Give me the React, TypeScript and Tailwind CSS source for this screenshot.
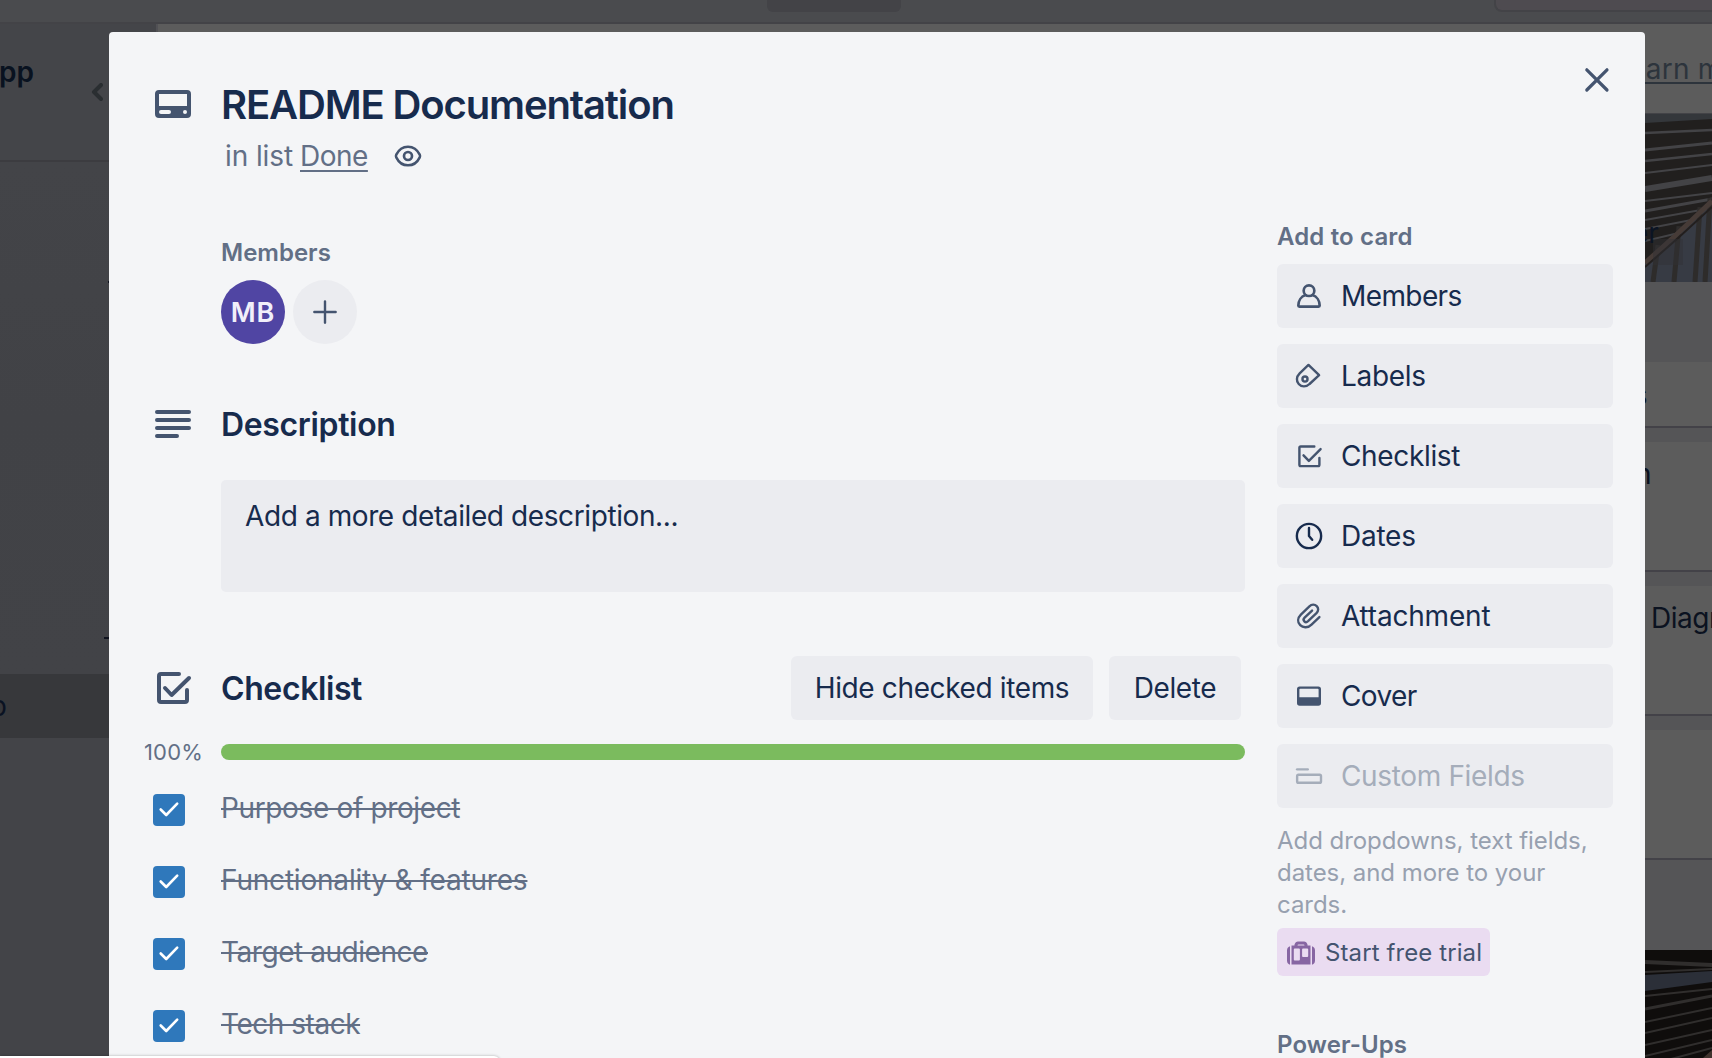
import React from "react";

const navy = "text-[#172b4d]";

function Icon({ className = "", children }: { className?: string; children: React.ReactNode }) {
  return (
    <svg viewBox="0 0 24 24" fill="none" className={`shrink-0 ${className}`}>
      {children}
    </svg>
  );
}

const stroke = { stroke: "currentColor", strokeWidth: 2, strokeLinecap: "round", strokeLinejoin: "round" } as const;

function CardIcon() {
  return (
    <Icon className="size-12 text-[#44546f]">
      <path
        fillRule="evenodd"
        fill="currentColor"
        d="M5 5h14a2 2 0 0 1 2 2v10a2 2 0 0 1-2 2H5a2 2 0 0 1-2-2V7a2 2 0 0 1 2-2ZM5 7v6h14V7ZM6 15a1 1 0 0 0 0 2h4a1 1 0 0 0 0-2ZM18 15a1 1 0 1 0 0 2a1 1 0 0 0 0-2Z"
      />
    </Icon>
  );
}

const sideItems: { label: string; tone?: string; track: string; icon: React.ReactNode }[] = [
  {
    label: "Members",
    track: "tracking-[-0.6px]",
    icon: (
      <>
        <circle cx="12" cy="8" r="4" stroke="currentColor" strokeWidth="2" />
        <path {...stroke} d="M9.4 11.3C6 12.4 4 15.8 4 19.2q0 .8.8.8h14.4q.8 0 .8-.8c0-3.4-2-6.8-5.4-7.9" />
      </>
    ),
  },
  {
    label: "Labels",
    track: "tracking-[-0.3px]",
    icon: (
      <>
        <path {...stroke} strokeWidth={1.8} d="M11.6 3.7L5 10C2.400 12.600 2.400 16 4.300 18C6.300 20.400 10 20.400 12.400 18L19.600 11.400Z" />
        <circle cx="9" cy="14.300" r="1.900" stroke="currentColor" strokeWidth="1.800" />
      </>
    ),
  },
  {
    label: "Checklist",
    track: "tracking-[-0.35px]",
    icon: (
      <>
        <path {...stroke} strokeWidth={1.800} d="M16 4.900H5.800a1 1 0 0 0-1 1v12.700a1 1 0 0 0 1 1h13a1 1 0 0 0 1-1V13.500" />
        <path {...stroke} strokeWidth={1.800} d="M7.900 11.500l4 4.200L20.700 6.800" />
      </>
    ),
  },
  {
    label: "Dates",
    tone: navy,
    track: "tracking-[-0.25px]",
    icon: (
      <>
        <circle cx="12" cy="12" r="9.100" stroke="currentColor" strokeWidth="1.800" />
        <path {...stroke} strokeWidth={1.800} d="M12 6v6l2.400 2.800" />
      </>
    ),
  },
  {
    label: "Attachment",
    track: "tracking-[-0.2px]",
    icon: (
      <path
        {...stroke}
        strokeWidth={1.8}
        d="M20.400 12.800l-5.900 5.600c-2.700 2.700-6.300 2.700-8.500.5s-2-5.500.5-8l6.400-6.100c1.700-1.600 4-1.600 5.500-.2s1.400 3.700-.2 5.300l-6.300 6c-.9.8-2 .9-2.800.1s-.7-1.900.2-2.800l5.600-5.300"
        transform="translate(-.6 0)"
      />
    ),
  },
  {
    label: "Cover",
    track: "tracking-[-0.6px]",
    icon: (
      <path
        fillRule="evenodd"
        fill="currentColor"
        d="M5 4.800h14a2 2 0 0 1 2 2v10.500a2 2 0 0 1-2 2H5a2 2 0 0 1-2-2V6.800a2 2 0 0 1 2-2ZM5.500 6.500q-.7 0-.7.7V13h14.400V7.200q0-.7-.7-.7Z"
      />
    ),
  },
  {
    label: "Custom Fields",
    tone: "text-[#a5adba]",
    track: "tracking-[-0.35px]",
    icon: (
      <>
        <path {...stroke} strokeWidth={1.8} d="M3.100 7h8" />
        <rect x="3.100" y="11.100" width="17.900" height="6" rx="1" stroke="currentColor" strokeWidth="1.800" />
      </>
    ),
  },
];

const checks = [
  { label: "Purpose of project", track: "tracking-[-0.36px]" },
  { label: "Functionality & features", track: "tracking-[-0.2px]" },
  { label: "Target audience", track: "tracking-[-0.45px]" },
  { label: "Tech stack", track: "tracking-[-0.47px]" },
];

function SlatsPhoto() {
  const lines = [
    [19, 16, 2.5], [36, 29, 3], [47, 40, 2.5], [59, 51, 2], [75, 64, 6], [87, 79, 2], [97, 85, 3], [106, 94, 2], [115, 102, 2], [127, 111, 2],
  ];
  return (
    <svg viewBox="0 0 67 168" className="ml-auto block h-[168px] w-[67px]" preserveAspectRatio="none">
      <rect width="67" height="168" fill="#211f1e" />
      <path d="M0 0h67v5L0 9Z" fill="#34373b" />
      {lines.map(([a, b, w]) => (
        <path key={a} d={`M0 ${a}L67 ${b}`} stroke="#434346" strokeWidth={w} />
      ))}
      <path d="M0 148L67 86V168H0Z" fill="#373b44" />
      {[10, 31, 52, 62].map((x) => (
        <path key={x} d={`M${x + 3} ${140 - x * 0.9}L${x - 2} 168`} stroke="#2e2c2b" strokeWidth="5" />
      ))}
      <path d="M0 149L30 122L67 87" stroke="#463b37" strokeWidth="5" fill="none" />
      <path d="M0 153L32 125L67 93" stroke="#231f1e" strokeWidth="2" fill="none" />
      <rect x="8" y="125" width="30" height="26" fill="#303136" opacity=".45" />
    </svg>
  );
}

function LowerPhoto() {
  const lines = [
    [12, 15, 4], [22, 19, 2], [46, 39, 2], [59, 46, 3], [72, 58, 2], [83, 68, 2], [95, 80, 2], [106, 90, 2], [116, 98, 2],
  ];
  return (
    <svg viewBox="0 0 67 108" className="ml-auto block h-[108px] w-[67px]">
      <rect width="67" height="108" fill="#0f0d0c" />
      <path d="M0 25L67 21V32L0 41Z" fill="#2b2f38" />
      {lines.map(([a, b, w]) => (
        <path key={a} d={`M0 ${a}L67 ${b}`} stroke="#302e2d" strokeWidth={w} />
      ))}
      <path d="M58 108L67 100V108Z" fill="#40342e" />
    </svg>
  );
}

function BoardCard({ className, children }: { className: string; children?: React.ReactNode }) {
  return (
    <div className={`border-b-2 border-[#434248] bg-[#5c5c5c] text-[28px] leading-10 tracking-[-0.5px] text-[#0b1220] ${className}`}>
      {children}
    </div>
  );
}

function Board() {
  return (
    <div className="flex h-full flex-col bg-[#5c5c5c]">
      <div className="flex h-6 shrink-0 items-start border-b-2 border-[#434347] bg-[#4a4b4e]">
        <div className="ml-[767px] h-3 w-[134px] rounded-b-md bg-[#434347]" />
        <div className="ml-auto h-3 w-[218px] rounded-bl-lg border-b-2 border-l-2 border-[#434347] bg-[#4e4b50]" />
      </div>
      <div className="flex min-h-0 grow justify-between">
        <div className="w-[158px] shrink-0 border-r-2 border-[#515155] bg-[#434448]">
          <div className="flex h-[138px] border-b-2 border-[#3c3c40] bg-[#444549]">
            <div className="mt-7 flex w-[34px] justify-end text-[28px] leading-10 font-semibold text-[#091220]">pp</div>
            <svg viewBox="0 0 12 18" className="mt-[59px] ml-[57px] h-[18px] w-3" fill="none">
              <path d="M10 2L3 9l7 7" stroke="#2a2e31" strokeWidth="4" strokeLinecap="round" strokeLinejoin="round" />
            </svg>
          </div>
          <div className="flex h-[512px] flex-col bg-linear-to-b from-[#434448] via-[#414246] to-[#424347]">
            <div className="mt-[119px] ml-[108px] h-0.5 w-4 bg-[#10131f]" />
            <div className="mt-[354px] ml-[104px] h-0.5 w-4 bg-[#10131f]" />
          </div>
          <div className="flex h-16 w-full items-center bg-[#37383b]">
            <div className="flex w-[7px] justify-end text-[28px] leading-10 text-[#0a1222]">p</div>
          </div>
        </div>
        <div className="w-[92px] shrink-0 overflow-hidden bg-[#555557]">
          <div className="h-[90px] border-b border-[#434347] bg-[#5c5c5c] pt-[25px] pl-[9px] text-[28px] leading-10 whitespace-nowrap text-[#2d343c]">
            <span className="tracking-[0.2px] underline decoration-2 underline-offset-[3px]">earn more</span>
          </div>
          <div className="relative">
            <SlatsPhoto />
            <div className="absolute top-[99px] left-[12px] text-[28px] leading-10 text-[#0b1424]">er</div>
          </div>
          <BoardCard className="mt-20 h-[66px] pt-[13px]">
            <div className="flex w-[27px] justify-end">s</div>
          </BoardCard>
          <BoardCard className="mt-[14px] h-[130px] pt-3">
            <div className="flex w-[31px] justify-end">n</div>
          </BoardCard>
          <BoardCard className="mt-[14px] h-[130px] pt-3 pl-[31px] whitespace-nowrap">Diagram</BoardCard>
          <BoardCard className="mt-[14px] h-[130px]" />
          <div className="h-[90px]" />
          <LowerPhoto />
        </div>
      </div>
    </div>
  );
}

function CardDialog() {
  return (
    <div className="absolute top-8 left-[109px] h-[1040px] w-[1536px] rounded-t-[4px] bg-[#f4f5f7]">
      <header className="flex pt-12 pl-10">
        <CardIcon />
        <div className="ml-6">
          <h1 className={`pt-px text-[40px] leading-[48px] font-semibold tracking-[-1.13px] whitespace-nowrap ${navy}`}>README Documentation</h1>
          <div className="mt-[7px] flex h-10 items-center pl-1 text-[28px] leading-10 text-[#626f86]">
            <span className="w-[75px] tracking-[-0.1px] whitespace-nowrap">in list</span>
            <span className="tracking-[-0.5px] underline decoration-2 underline-offset-4">Done</span>
            <Icon className="ml-6 size-8 text-[#44546f]">
              <path {...stroke} strokeWidth={1.9} d="M12 5c-4.300 0-7.400 3.100-8.800 6q-.5 1 0 2c1.400 2.900 4.500 6 8.800 6s7.400-3.100 8.800-6q.5-1 0-2C19.400 8.100 16.300 5 12 5Z" />
              <circle cx="12" cy="12" r="3" stroke="currentColor" strokeWidth="2" />
            </Icon>
          </div>
        </div>
        <Icon className="mt-[-24px] mr-6 ml-auto size-12 text-[#44546f]">
          <path {...stroke} strokeWidth={1.6} d="M6.900 6.900l10.100 10.100M17 6.900l-10.100 10.100" />
        </Icon>
      </header>

      <div className="mt-11 flex">
        <main className="w-[1136px] pt-[17px]">
          <div className="ml-28">
            <h3 className="text-2xl leading-8 font-semibold text-[#626f86]">Members</h3>
            <div className="mt-[11px] flex gap-2">
              <div className="flex size-16 items-center justify-center rounded-full bg-[#5045a3] text-[27px] leading-none font-semibold tracking-[0.8px] text-[#f1effa]">MB</div>
              <div className="flex size-16 items-center justify-center rounded-full bg-[#ebecf0]">
                <Icon className="size-8 text-[#44546f]">
                  <path {...stroke} strokeWidth={1.8} d="M12 4v16M4 12h16" />
                </Icon>
              </div>
            </div>
          </div>

          <div className="mt-14 ml-10 flex h-12 items-center gap-6">
            <Icon className="size-12 text-[#44546f]">
              <path {...stroke} d="M4 6h16M4 10h16M4 14h16M4 18h10" />
            </Icon>
            <h2 className={`pt-0.5 text-[32px] leading-10 font-semibold tracking-[-0.35px] ${navy}`}>Description</h2>
          </div>
          <div className={`mt-8 ml-28 h-28 rounded-[5px] bg-[#ebecf0] px-6 py-4 text-[28px] leading-10 tracking-[-0.4px] ${navy}`}>
            Add a more detailed description...
          </div>

          <div className="mt-16 ml-10 flex h-16 items-center">
            <Icon className="size-12 text-[#44546f]">
              <path {...stroke} d="M15 5H6a1 1 0 0 0-1 1v12a1 1 0 0 0 1 1h12a1 1 0 0 0 1-1v-5" />
              <path {...stroke} d="M8 12l3.300 3.500L20 7" />
            </Icon>
            <h2 className={`ml-6 pt-0.5 text-[32px] leading-10 font-semibold tracking-[-0.4px] ${navy}`}>Checklist</h2>
            <div className={`mr-1 ml-auto flex gap-4 text-[28px] leading-10 tracking-[-0.37px] ${navy}`}>
              <button className="h-16 w-[302px] rounded-md bg-[#ebecf0] whitespace-nowrap">Hide checked items</button>
              <button className="h-16 w-[132px] rounded-md bg-[#ebecf0]">Delete</button>
            </div>
          </div>

          <div className="mt-4 flex h-8 items-center">
            <div className="flex w-28 justify-center pl-[17px] text-[22px] leading-8 tracking-[0.2px] text-[#626f86]">100%</div>
            <div className="h-4 grow rounded-full bg-[#7bbb5e]" />
          </div>

          <ul className="mt-1.5">
            {checks.map((c) => (
              <li key={c.label} className="flex h-[72px]">
                <div className="mt-5 ml-11 flex size-8 items-center justify-center rounded-[4px] bg-[#2f78bb]">
                  <svg viewBox="0 0 32 32" className="size-8" fill="none">
                    <path d="M7.700 15.500l5.500 5.500L24.200 9.700" stroke="#fff" strokeWidth="2.600" strokeLinecap="round" strokeLinejoin="round" />
                  </svg>
                </div>
                <span className={`mt-[14px] ml-9 h-10 text-[28px] leading-10 text-[#626f86] line-through decoration-2 ${c.track}`}>{c.label}</span>
              </li>
            ))}
          </ul>
        </main>

        <aside className="ml-8 w-[336px]">
          <h3 className="pt-px text-2xl leading-8 font-semibold tracking-[0.15px] text-[#626f86]">Add to card</h3>
          <div className="mt-[11px] flex flex-col gap-4">
            {sideItems.map((s) => (
              <button
                key={s.label}
                className={`flex h-16 items-center gap-4 rounded-md bg-[#ebecf0] px-4 text-[28px] leading-10 ${s.track} ${s.label === "Custom Fields" ? "text-[#a5adba]" : navy}`}
              >
                <Icon className={`size-8 ${s.tone ?? "text-[#44546f]"}`}>{s.icon}</Icon>
                {s.label}
              </button>
            ))}
          </div>
          <p className="mt-[17px] text-2xl leading-8 tracking-[-0.05px] text-[#97a0af]">
            Add dropdowns, text fields,
            <br />
            dates, and more to your
            <br />
            cards.
          </p>
          <button className="mt-[7px] flex h-12 w-[213px] items-center rounded-md bg-[#eadcf1] pt-px text-2xl leading-8 tracking-[0.1px] whitespace-nowrap text-[#44546f]">
            <svg viewBox="0 0 28 24" className="mr-[10px] ml-[10px] h-6 w-7 shrink-0" fill="#8766a3">
              <path d="M3 5.500v18H2.200Q0 22.500 0 20V9Q0 6.500 2.200 5.500ZM25 5.500v18h.8q2.200-1 2.200-3.500V9q0-2.500-2.200-3.500Z" />
              <path
                fillRule="evenodd"
                d="M4.500 4.500H7.500V3.500Q8.500.5 11 .5h6q2.500 0 3.500 3v1h3v19h-19ZM10.500 4.500h7q0-1-1-1h-5q-1 0-1 1ZM7.700 7.500Q6.800 7.500 6.800 8.500v10q0 1 .9 1h4.200q1 0 1-1v-10q0-1-1-1ZM16 7.500q-.9 0-.9 1v6.500q0 1 .9 1h4.200q1 0 1-1V8.500q0-1-1-1Z"
              />
            </svg>
            Start free trial
          </button>
          <h3 className="mt-[53px] text-2xl leading-8 font-semibold tracking-[0.1px] text-[#626f86]">Power-Ups</h3>
        </aside>
      </div>
    </div>
  );
}

export default function App() {
  return (
    <div className="relative h-[1058px] w-[1712px] overflow-hidden font-['Inter',sans-serif]">
      <Board />
      <CardDialog />
      <div className="absolute top-[1056px] left-0 h-2 w-[500px] rounded-tr-md bg-white shadow-[0_0_3px_rgba(0,0,0,0.3)]" />
    </div>
  );
}
